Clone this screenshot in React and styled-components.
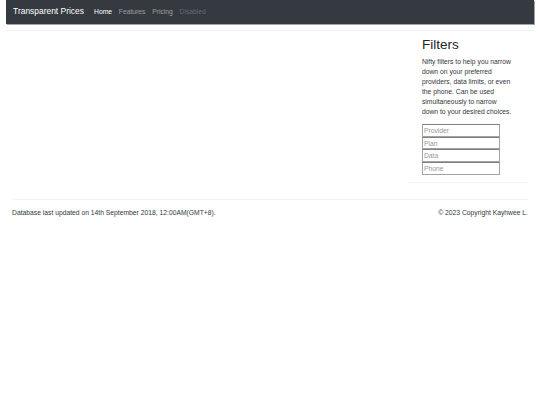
import React from "react";
import styled, { createGlobalStyle } from "styled-components";

const GlobalStyle = createGlobalStyle`
  * { box-sizing: border-box; }
  body {
    margin: 0;
    background: #fff;
    color: #212529;
    font-family: "Liberation Sans", Arial, Helvetica, sans-serif;
    font-size: 6.75px;
    line-height: 1.5;
  }
`;

const links = [
    { label: "Home", state: "active" },
    { label: "Features", state: "normal" },
    { label: "Pricing", state: "normal" },
    { label: "Disabled", state: "disabled" },
];

const fields = ["Provider", "Plan", "Data", "Phone"];

function App() {
    return (
        <Page>
            <GlobalStyle />
            <Navbar>
                <Brand>Transparent Prices</Brand>
                <NavList>
                    {links.map((l) => (
                        <NavLink key={l.label} state={l.state}>{l.label}</NavLink>
                    ))}
                </NavList>
            </Navbar>
            <Rule />
            <Main>
                <Sidebar>
                    <SideInner>
                        <Heading>Filters</Heading>
                        <Blurb>
                            Nifty filters to help you narrow down on your preferred
                            providers, data limits, or even the phone. Can be used
                            simultaneously to narrow down to your desired choices.
                        </Blurb>
                        {fields.map((f) => (
                            <FilterInput key={f} type="text" placeholder={f} />
                        ))}
                    </SideInner>
                    <SideRule />
                </Sidebar>
            </Main>
            <Footer>
                <FootRule />
                <FootRow>
                    <span>Database last updated on 14th September 2018, 12:00AM(GMT+8).</span>
                    <span>© 2023 Copyright Kayhwee L.</span>
                </FootRow>
            </Footer>
        </Page>
    );
}

export default App;

const Page = styled.div`
padding: 0 6.33px;
`;

const Navbar = styled.nav`
height: 23.6px;
display: flex;
align-items: center;
padding: 0 6.75px;
background-color: #343a40;
box-shadow: 1px 1px 0 #a4a4a4;
`;

const Brand = styled.span`
font-size: 8.44px;
color: #fff;
margin-right: 6.75px;
white-space: nowrap;
`;

const NavList = styled.div`
display: flex;
`;

const NavLink = styled.span`
padding: 0 3.375px;
font-size: 6.75px;
color: ${(p) =>
        p.state === "active"
            ? "#fff"
            : p.state === "disabled"
                ? "rgba(255,255,255,0.25)"
                : "rgba(255,255,255,0.5)"};
`;

const Rule = styled.div`
margin: 6.75px 0 5.75px;
border-top: 1px solid #f1f1f1;
`;

const Main = styled.div`
display: flex;
justify-content: flex-end;
padding-right: 6.2px;
`;

const Sidebar = styled.aside`
width: 119.5px;
`;

const SideInner = styled.div`
padding: 0 14.5px 0 14px;
`;

const Heading = styled.h2`
margin: 0 0 3.375px;
font-size: 13.5px;
font-weight: 500;
line-height: 1.2;
`;

const Blurb = styled.p`
margin: 0 0 6.75px;
line-height: 10.125px;
color: #33373b;
`;

const FilterInput = styled.input`
display: block;
width: 78px;
height: 12.66px;
margin: 0;
padding: 0 1px;
font-family: inherit;
font-size: 6.75px;
color: #212529;
border: 1px solid #a3a3a3;
border-top-color: #808080;
border-radius: 0;
background: #fff;
&::placeholder {
    color: #999;
}
`;

const SideRule = styled.div`
margin-top: 6.75px;
border-top: 1px solid #f1f1f1;
`;

const Footer = styled.footer`
padding: 0 5.7px;
color: #33373b;
`;

const FootRule = styled.div`
margin: 16.5px 0 7.7px;
border-top: 1px solid #f1f1f1;
`;

const FootRow = styled.div`
display: flex;
justify-content: space-between;
`;
